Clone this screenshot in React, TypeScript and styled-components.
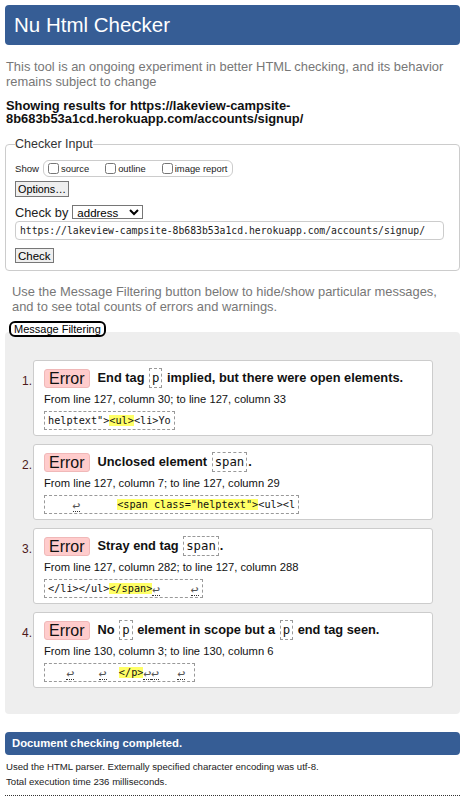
import React from 'react';
import styled, { createGlobalStyle } from 'styled-components';

const GlobalStyle = createGlobalStyle`
  body {
    margin: 0;
    background: #fff;
    font-family: 'Liberation Sans', Arial, sans-serif;
    color: #000;
  }
`;

type Part = { text: string; mark?: boolean; ret?: boolean };

type Message = {
  title: () => React.ReactNode;
  location: string;
  extract: Part[];
};

const r = (text: string): Part => ({ text, ret: true });

const messages: Message[] = [
  {
    title: () => (
      <>
        End tag <Code>p</Code> implied, but there were open elements.
      </>
    ),
    location: 'From line 127, column 30; to line 127, column 33',
    extract: [{ text: 'helptext">' }, { text: '<ul>', mark: true }, { text: '<li>Yo' }],
  },
  {
    title: () => (
      <>
        Unclosed element <Code>span</Code>.
      </>
    ),
    location: 'From line 127, column 7; to line 127, column 29',
    extract: [
      { text: '    ' },
      r('↩'),
      { text: '      ' },
      { text: '<span class="helptext">', mark: true },
      { text: '<ul><l' },
    ],
  },
  {
    title: () => (
      <>
        Stray end tag <Code>span</Code>.
      </>
    ),
    location: 'From line 127, column 282; to line 127, column 288',
    extract: [
      { text: '</li></ul>' },
      { text: '</span>', mark: true },
      r('↩'),
      { text: '     ' },
      r('↩'),
    ],
  },
  {
    title: () => (
      <>
        No <Code>p</Code> element in scope but a <Code>p</Code> end tag seen.
      </>
    ),
    location: 'From line 130, column 3; to line 130, column 6',
    extract: [
      { text: '   ' },
      r('↩'),
      { text: '    ' },
      r('↩'),
      { text: '  ' },
      { text: '</p>', mark: true },
      r('↩'),
      r('↩'),
      { text: '   ' },
      r('↩'),
      { text: ' ' },
    ],
  },
];

export default function App() {
  return (
    <>
      <GlobalStyle />
      <Page>
        <Header>Nu Html Checker</Header>
        <Intro>
          This tool is an ongoing experiment in better HTML checking, and its behavior
          remains subject to change
        </Intro>
        <ResultsFor>
          Showing results for https://lakeview-campsite-8b683b53a1cd.herokuapp.com/accounts/signup/
        </ResultsFor>

        <Fieldset>
          <Legend>Checker Input</Legend>
          <ShowRow>
            <SmallLabel>Show</SmallLabel>
            <ShowGroup>
              <Check>
                <input type="checkbox" /> source
              </Check>
              <Check>
                <input type="checkbox" /> outline
              </Check>
              <Check>
                <input type="checkbox" /> image report
              </Check>
            </ShowGroup>
          </ShowRow>
          <Button>Options…</Button>
          <CheckByRow>
            Check by
            <Select defaultValue="address">
              <option value="address">address</option>
            </Select>
          </CheckByRow>
          <UrlInput
            readOnly
            value="https://lakeview-campsite-8b683b53a1cd.herokuapp.com/accounts/signup/"
          />
          <Button $big>Check</Button>
        </Fieldset>

        <Intro $indent>
          Use the Message Filtering button below to hide/show particular messages,
          and to see total counts of errors and warnings.
        </Intro>
        <FilterButton>Message Filtering</FilterButton>

        <Results>
          <MessageList>
            {messages.map((m, i) => (
              <Item key={i}>
                <Num>{i + 1}.</Num>
                <Card>
                  <TitleRow>
                    <Badge>Error</Badge>
                    <Title>{m.title()}</Title>
                  </TitleRow>
                  <Location>{m.location}</Location>
                  <Extract>
                    {m.extract.map((p, j) =>
                      p.mark ? (
                        <Mark key={j}>{p.text}</Mark>
                      ) : p.ret ? (
                        <Ret key={j} title="Line break">
                          {p.text}
                        </Ret>
                      ) : (
                        <span key={j}>{p.text}</span>
                      ),
                    )}
                  </Extract>
                </Card>
              </Item>
            ))}
          </MessageList>
        </Results>

        <Done>Document checking completed.</Done>
        <Footer>
          <Details>Used the HTML parser. Externally specified character encoding was utf-8.</Details>
          <Details>Total execution time 236 milliseconds.</Details>
        </Footer>
        <Rule />
      </Page>
    </>
  );
}

const mono = `'DejaVu Sans Mono', 'Liberation Mono', monospace`;

const Page = styled.div`
  padding: 5px 6px 0 5px;
  display: flex;
  flex-direction: column;
`;

const Header = styled.h1`
  margin: 0;
  height: 40px;
  background: #365d95;
  border-radius: 4px;
  color: #fff;
  font-size: 20.5px;
  font-weight: normal;
  line-height: 40px;
  padding-left: 9px;
`;

const Intro = styled.p<{ $indent?: boolean }>`
  margin: ${(p) => (p.$indent ? '13px 0 0 7px' : '14px 0 0 1px')};
  font-size: 12.9px;
  line-height: 15px;
  color: #777;
`;

const ResultsFor = styled.p`
  margin: 10px 0 0 1px;
  font-size: 12.9px;
  font-weight: bold;
  line-height: 13px;
  color: #111;
`;

const Fieldset = styled.fieldset`
  margin: 12px 0 0;
  padding: 2px 9px 7px;
  border: 1px solid #ccc;
  border-radius: 4px;
  display: flex;
  flex-direction: column;
  align-items: flex-start;
`;

const Legend = styled.legend`
  padding: 0;
  font-size: 12.5px;
  color: #333;
`;

const ShowRow = styled.div`
  display: flex;
  align-items: center;
  gap: 4px;
  margin-top: 7px;
`;

const SmallLabel = styled.span`
  font-size: 9.6px;
  color: #222;
`;

const ShowGroup = styled.div`
  display: flex;
  align-items: center;
  gap: 16px;
  border: 1px solid #ccc;
  border-radius: 6px;
  padding: 0 5px 0 4px;
  height: 15px;
`;

const Check = styled.label`
  display: flex;
  align-items: center;
  font-size: 9.4px;
  color: #222;

  input {
    margin: 0 2px 0 0;
    width: 11px;
    height: 11px;
  }
`;

const Button = styled.button<{ $big?: boolean }>`
  margin-top: ${(p) => (p.$big ? '8px' : '4px')};
  font-family: inherit;
  font-size: ${(p) => (p.$big ? '11.5px' : '10.8px')};
  padding: 0 2px;
  height: ${(p) => (p.$big ? '15px' : '16px')};
  background: #efefef;
  border: 1px solid #777;
  border-radius: 0;
  color: #000;
`;

const CheckByRow = styled.label`
  display: flex;
  align-items: center;
  gap: 4px;
  height: 16px;
  margin-top: 7px;
  font-size: 12.8px;
  color: #222;
`;

const Select = styled.select`
  font-family: inherit;
  font-size: 11.5px;
  height: 14px;
  width: 71px;
  padding: 0;
  border: 1px solid #767676;
  border-radius: 0;
  background: #fff;
  color: #000;
`;

const UrlInput = styled.input`
  margin-top: 1px;
  box-sizing: border-box;
  width: 429px;
  height: 19px;
  border: 1px solid #ccc;
  border-radius: 4px;
  padding: 0 4px;
  font-family: ${mono};
  font-size: 9.75px;
  color: #222;
`;

const FilterButton = styled.button`
  align-self: flex-start;
  position: relative;
  z-index: 1;
  margin: 7px 0 0 4px;
  height: 16px;
  padding: 0 3px;
  font-family: inherit;
  font-size: 11px;
  color: #000;
  background: #fff;
  border: 2px solid #000;
  border-radius: 6px;
`;

const Results = styled.div`
  margin-top: -5px;
  background: #eee;
  border-radius: 4px;
  padding: 28px 27px 26px 28px;
`;

const MessageList = styled.ol`
  margin: 0;
  padding: 0;
  list-style: none;
  display: flex;
  flex-direction: column;
  gap: 8px;
`;

const Item = styled.li`
  position: relative;
`;

const Num = styled.span`
  position: absolute;
  left: -11px;
  top: 14px;
  font-size: 12px;
  color: #4d1a1a;
`;

const Card = styled.div`
  background: #fff;
  border: 1px solid #ccc;
  border-radius: 3px;
  height: 76px;
  box-sizing: border-box;
  padding: 8px 10px 0;
`;

const TitleRow = styled.div`
  display: flex;
  align-items: center;
  gap: 8px;
`;

const Badge = styled.span`
  background: #fcc;
  border: 1px solid #f0b8b8;
  border-radius: 3px;
  font-size: 16px;
  line-height: 17px;
  padding: 0 4px;
  color: #111;
`;

const Title = styled.span`
  font-size: 12.8px;
  font-weight: bold;
  color: #111;
  white-space: nowrap;
`;

const Code = styled.code`
  display: inline-block;
  vertical-align: middle;
  font-family: ${mono};
  font-weight: normal;
  font-size: 12.3px;
  line-height: 16px;
  padding: 1px 2px;
  border: 1px dashed #999;
  margin: -2px 1px 0;
`;

const Location = styled.div`
  margin-top: 5px;
  font-size: 11.2px;
  color: #111;
`;

const Extract = styled.div`
  display: inline-block;
  margin-top: 6px;
  padding: 1px 3px;
  border: 1px dashed #999;
  font-family: ${mono};
  font-size: 10.2px;
  line-height: 15px;
  white-space: pre;
  color: #111;
`;

const Mark = styled.span`
  background: #ff6;
`;

const Ret = styled.span`
  display: inline-block;
  width: 1ch;
  text-align: center;
  font-size: 13px;
  line-height: 11px;
  vertical-align: -2px;
  color: #555;
  border-bottom: 1px dotted #333;
  overflow: visible;
`;

const Done = styled.div`
  margin-top: 18px;
  height: 23px;
  line-height: 23px;
  background: #365d95;
  border-radius: 4px;
  color: #fff;
  font-size: 11.3px;
  font-weight: bold;
  padding-left: 7px;
`;

const Footer = styled.div`
  display: flex;
  flex-direction: column;
  gap: 2px;
  padding: 5px 0 0 1px;
`;

const Details = styled.p`
  margin: 0;
  font-size: 9.6px;
  line-height: 13px;
  color: #222;
`;

const Rule = styled.hr`
  margin: 7px 0 0;
  border: 0;
  border-top: 1px dotted #333;
`;
